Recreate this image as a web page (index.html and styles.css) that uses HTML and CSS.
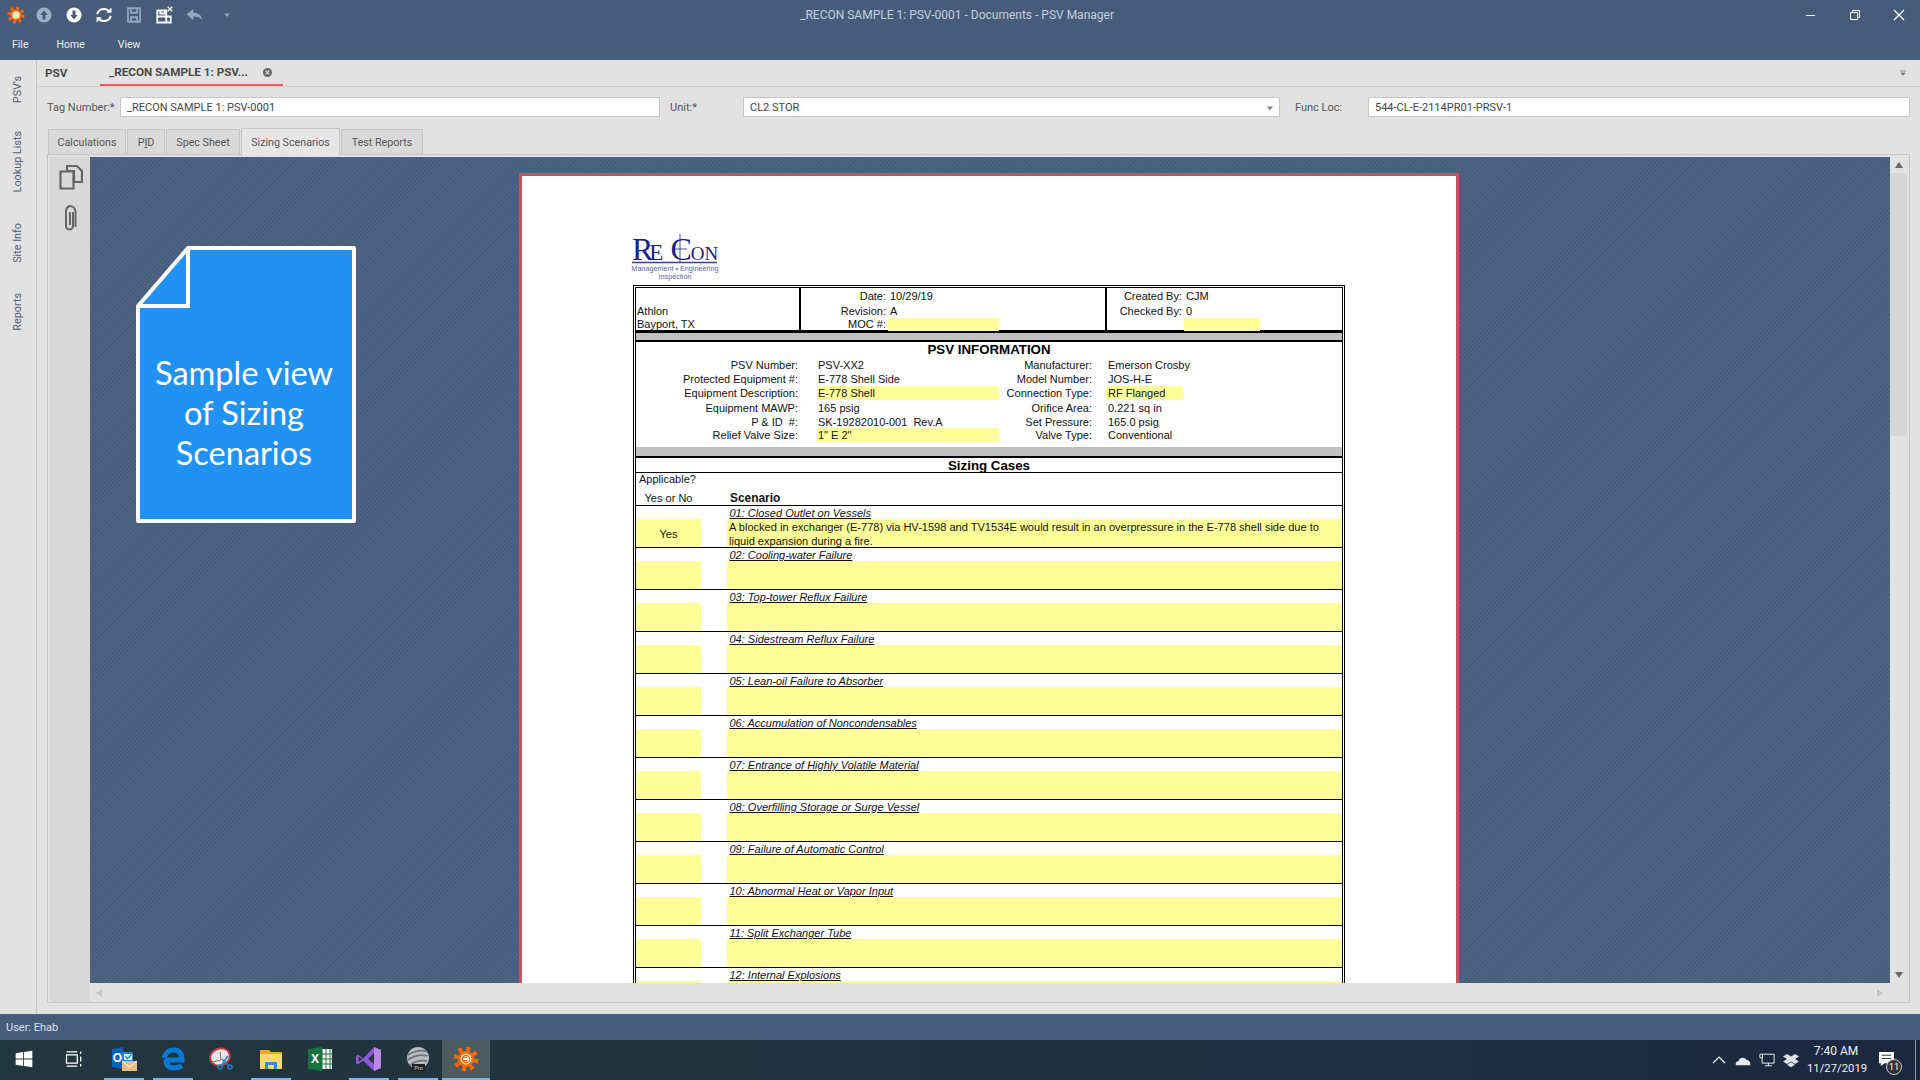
FILE: index.html
```html
<!DOCTYPE html>
<html lang="en">
<head>
    <meta charset="utf-8">
    <title>_RECON SAMPLE 1: PSV-0001 - Documents - PSV Manager</title>
    <link rel="stylesheet" href="styles.css">
</head>
<body>
<svg class="defs" width="0" height="0">
    <symbol id="gear" viewBox="0 0 24 24">
        <circle cx="12" cy="12" r="9" fill="none" stroke="#f66a0a" stroke-width="5" stroke-dasharray="3.5 3.57"/>
        <circle cx="12" cy="12" r="7.5" fill="#f66a0a"/>
    </symbol>
</svg>
<div class="app">
    <header class="titlebar">
        <div class="quick-icons">
            <svg class="qicon" viewBox="0 0 24 24"><use href="#gear"/><circle cx="12" cy="12" r="5" fill="#ffe9b8"/></svg>
            <svg class="qicon" viewBox="0 0 24 24"><circle cx="12" cy="12" r="10" fill="#9fb0c5"/><path d="M12 6l5 6h-3v6h-4v-6H7z" fill="#465c7c"/></svg>
            <svg class="qicon" viewBox="0 0 24 24"><circle cx="12" cy="12" r="10" fill="#fff"/><path d="M12 18l5-6h-3V6h-4v6H7z" fill="#465c7c"/></svg>
            <svg class="qicon" viewBox="0 0 24 24" fill="none" stroke="#fff" stroke-width="2.6"><path d="M3 11a9 8 0 0 1 16-4"/><path d="M21 13a9 8 0 0 1-16 4"/><path d="M22 2v7h-7z" fill="#fff" stroke="none"/><path d="M2 22v-7h7z" fill="#fff" stroke="none"/></svg>
            <svg class="qicon" viewBox="0 0 24 24" fill="none" stroke="#94a6bc" stroke-width="2.4"><path d="M4 3h16v18H4z"/><path d="M8 3v6h8V3M8 21v-6h8v6"/></svg>
            <svg class="qicon" viewBox="0 0 24 24" fill="none" stroke="#fff" stroke-width="2.4"><path d="M3 6h12v16H3zM3 14h18v8H3z"/><path d="M7 6v4h6V6"/><path d="M17 1l6 6M23 1l-6 6" stroke-width="1.6"/></svg>
            <svg class="qicon" viewBox="0 0 24 24"><path d="M2 11l9-7v5c7 0 11 3 12 10-3-4-6-5-12-5v5z" fill="#94a6bc"/></svg>
            <svg class="qicon qicon-small" viewBox="0 0 24 24"><path d="M6 9h12l-6 7z" fill="#94a6bc"/></svg>
        </div>
        <div class="app-title">_RECON SAMPLE 1: PSV-0001 - Documents - PSV Manager</div>
        <div class="window-buttons">
            <svg class="winicon" viewBox="0 0 12 12"><path d="M1 6.5h9" stroke="#fff"/></svg>
            <svg class="winicon" viewBox="0 0 12 12" fill="none" stroke="#fff"><path d="M1.5 3.5h7v7h-7zM3.5 3.5v-2h7v7h-2"/></svg>
            <svg class="winicon" viewBox="0 0 12 12" fill="none" stroke="#fff" stroke-width="1.3"><path d="M1 1l10 10M11 1L1 11"/></svg>
        </div>
    </header>
    <nav class="menubar">
        <span class="menu-file">File</span>
        <span class="menu-home">Home</span>
        <span class="menu-view">View</span>
    </nav>

    <div class="workspace">
        <aside class="rail">
            <span class="rail-item rail-psv">PSV's</span>
            <span class="rail-item rail-lookup">Lookup Lists</span>
            <span class="rail-item rail-site">Site Info</span>
            <span class="rail-item rail-reports">Reports</span>
        </aside>
        <main class="main">
            <div class="doc-tabs">
                <span class="doc-tab doc-tab-home">PSV</span>
                <span class="doc-tab doc-tab-active">_RECON SAMPLE 1: PSV...
                    <svg class="tab-close" viewBox="0 0 12 12"><circle cx="6" cy="6" r="5" fill="#6a6a6a"/><path d="M4 4l4 4M8 4l-4 4" stroke="#e2e2e2" stroke-width="1.2"/></svg>
                </span>
                <svg class="tabs-menu" viewBox="0 0 8 8"><path d="M1 2h6M2 4h4l-2 2.5z" stroke="#777" fill="#777" stroke-width=".8"/></svg>
            </div>
            <div class="field-row">
                <label class="field-label label-tag">Tag Number:*</label>
                <div class="field field-tag">_RECON SAMPLE 1: PSV-0001</div>
                <label class="field-label label-unit">Unit:*</label>
                <div class="field field-unit">CL2 STOR
                    <svg class="combo-arrow" viewBox="0 0 8 8"><path d="M1 2.5h6L4 6.5z" fill="#888"/></svg>
                </div>
                <label class="field-label label-func">Func Loc:</label>
                <div class="field field-func">544-CL-E-2114PR01-PRSV-1</div>
            </div>
            <div class="page-tabs">
                <span class="page-tab tab-calc">Calculations</span>
                <span class="page-tab tab-pid">P<u>I</u>D</span>
                <span class="page-tab tab-spec">Spec Sheet</span>
                <span class="page-tab tab-sizing">Sizing Scenarios</span>
                <span class="page-tab tab-test">Test Reports</span>
            </div>
            <section class="panel">
                <div class="side-tools">
                    <svg class="tool-copy" viewBox="0 0 24 26" fill="none" stroke="#666" stroke-width="2.2"><path d="M8 7V2h10l5 5v11h-8"/><path d="M1.500 7.500h13v17h-13z"/><path d="M8 7h7v11"/></svg>
                    <svg class="tool-clip" viewBox="0 0 15 28" fill="none" stroke="#666" stroke-width="2"><path d="M11 8v14a3.500 3.500 0 0 1-7 0V7a5.500 5.500 0 0 1 3.500-5c3 0 6 2 6 6v15"/><path d="M8 8v13"/></svg>
                </div>
                <div class="view">
                    <div class="sheet-page">
                        <svg class="logo" viewBox="0 0 90 56">
                            <text x="2" y="34" class="logo-mid"><tspan class="logo-big">R</tspan><tspan class="logo-e" dx="-4">E</tspan><tspan class="logo-big" dx="7">C</tspan><tspan dx="-1">ON</tspan></text>
                            <path d="M50 8v28M43 23h14" stroke="#1c2087" stroke-width=".8"/>
                            <path d="M2 36.500h85" stroke="#3a3fa0" stroke-width="1.400"/>
                            <text x="45" y="45" class="logo-small">Management • Engineering</text>
                            <text x="45" y="53" class="logo-small">Inspection</text>
                        </svg>
                        <div class="sheet">
                            <div class="sheet-inner">
                                <div class="doc-head">
                                    <div class="head-cell head-site">
                                        <div>Athlon</div>
                                        <div>Bayport, TX</div>
                                    </div>
                                    <div class="head-cell head-date">
                                        <div class="kv kv-date"><span>Date:</span><span>10/29/19</span></div>
                                        <div class="kv kv-date"><span>Revision:</span><span>A</span></div>
                                        <div class="kv kv-date"><span>MOC #:</span><span class="fill moc"></span></div>
                                    </div>
                                    <div class="head-cell head-by">
                                        <div class="kv kv-by"><span>Created By:</span><span>CJM</span></div>
                                        <div class="kv kv-by"><span>Checked By:</span><span>0</span></div>
                                        <div class="kv kv-by"><span></span><span class="fill checked"></span></div>
                                    </div>
                                </div>
                                <div class="band band-top"></div>
                                <div class="info">
                                    <h2 class="sheet-title info-title">PSV INFORMATION</h2>
                                    <div class="info-row"><span class="lbl">PSV Number:</span><span class="val">PSV-XX2</span><span class="lbl">Manufacturer:</span><span class="val">Emerson Crosby</span></div>
                                    <div class="info-row"><span class="lbl">Protected Equipment #:</span><span class="val">E-778 Shell Side</span><span class="lbl">Model Number:</span><span class="val">JOS-H-E</span></div>
                                    <div class="info-row"><span class="lbl">Equipment Description:</span><span class="val fill">E-778 Shell</span><span class="lbl">Connection Type:</span><span class="val fill fill-short">RF Flanged</span></div>
                                    <div class="info-row row-gap"><span class="lbl">Equipment MAWP:</span><span class="val">165 psig</span><span class="lbl">Orifice Area:</span><span class="val">0.221 sq in</span></div>
                                    <div class="info-row row-thin"><span class="lbl">P &amp; ID  #:</span><span class="val">SK-19282010-001  Rev.A</span><span class="lbl">Set Pressure:</span><span class="val">165.0 psig</span></div>
                                    <div class="info-row"><span class="lbl">Relief Valve Size:</span><span class="val fill">1" E 2"</span><span class="lbl">Valve Type:</span><span class="val">Conventional</span></div>
                                </div>
                                <div class="band band-mid"></div>
                                <h2 class="sheet-title cases-title">Sizing Cases</h2>
                                <div class="cases-head">
                                    <div class="applicable">Applicable?</div>
                                    <div class="cases-cols"><span class="yes-no">Yes or No</span><b class="scenario">Scenario</b></div>
                                </div>
                                <div class="case"><i class="case-name">01: Closed Outlet on Vessels</i><div class="case-yes">Yes</div><div class="case-text">A blocked in exchanger (E-778) via HV-1598 and TV1534E would result in an overpressure in the E-778 shell side due to liquid expansion during a fire.</div></div>
                                <div class="case"><i class="case-name">02: Cooling-water Failure</i><div class="case-yes"></div><div class="case-text"></div></div>
                                <div class="case"><i class="case-name">03: Top-tower Reflux Failure</i><div class="case-yes"></div><div class="case-text"></div></div>
                                <div class="case"><i class="case-name">04: Sidestream Reflux Failure</i><div class="case-yes"></div><div class="case-text"></div></div>
                                <div class="case"><i class="case-name">05: Lean-oil Failure to Absorber</i><div class="case-yes"></div><div class="case-text"></div></div>
                                <div class="case"><i class="case-name">06: Accumulation of Noncondensables</i><div class="case-yes"></div><div class="case-text"></div></div>
                                <div class="case"><i class="case-name">07: Entrance of Highly Volatile Material</i><div class="case-yes"></div><div class="case-text"></div></div>
                                <div class="case"><i class="case-name">08: Overfilling Storage or Surge Vessel</i><div class="case-yes"></div><div class="case-text"></div></div>
                                <div class="case"><i class="case-name">09: Failure of Automatic Control</i><div class="case-yes"></div><div class="case-text"></div></div>
                                <div class="case"><i class="case-name">10: Abnormal Heat or Vapor Input</i><div class="case-yes"></div><div class="case-text"></div></div>
                                <div class="case"><i class="case-name">11: Split Exchanger Tube</i><div class="case-yes"></div><div class="case-text"></div></div>
                                <div class="case"><i class="case-name">12: Internal Explosions</i><div class="case-yes"></div><div class="case-text"></div></div>
                            </div>
                        </div>
                    </div>
                    <div class="note">
                        <svg class="note-shape" viewBox="0 0 220 277"><path d="M52 2H218V275H2V60z" fill="#2192f2" stroke="#fff" stroke-width="4" stroke-linejoin="round"/><path d="M52 2V60H2" fill="none" stroke="#fff" stroke-width="4"/></svg>
                        <p class="note-text">Sample view<br>of Sizing<br>Scenarios</p>
                    </div>
                </div>
                <div class="vscroll">
                    <svg class="sb-arrow" viewBox="0 0 10 10"><path d="M1 8h8L5 2z" fill="#666"/></svg>
                    <div class="vthumb"></div>
                    <svg class="sb-arrow" viewBox="0 0 10 10"><path d="M1 2h8L5 8z" fill="#666"/></svg>
                </div>
                <div class="hscroll">
                    <svg class="sb-arrow" viewBox="0 0 10 10"><path d="M8 1v8L2 5z" fill="#c4c4c4"/></svg>
                    <svg class="sb-arrow" viewBox="0 0 10 10"><path d="M2 1v8l6-4z" fill="#c4c4c4"/></svg>
                </div>
            </section>
        </main>
    </div>

    <footer class="statusbar">User: Ehab</footer>

    <div class="taskbar">
        <div class="task task-start"><svg class="ticon" viewBox="0 0 24 24" fill="#fff"><path d="M2 5l9-1.300V11.500H2zM12 3.500L22 2v9.500H12zM2 12.500h9v7.800L2 19zM12 12.500h10V22l-10-1.500z"/></svg></div>
        <div class="task task-view"><svg class="ticon" viewBox="0 0 24 24" fill="none" stroke="#fff" stroke-width="1.500"><path d="M3 7h13v10H3zM3 3.500h13M3 20.500h13M20 3v3M20 9v6M20 18v3"/></svg></div>
        <div class="task running"><svg class="ticon ticon-large" viewBox="0 0 26 26"><path d="M1 3l11-2v22L1 21z" fill="#0a62c0"/><path d="M11 6h11v9H11z" fill="#1a88de"/><path d="M13 8h8v6h-8z" fill="#fff"/><path d="M14 10l2.500 2.500 4-4" stroke="#1a88de" fill="none" stroke-width="1.500"/><text x="6.500" y="16" class="t-o">O</text><path d="M11 15h15v10H11z" fill="#edbc7c"/><path d="M11 15l7.500 6 7.500-6" fill="none" stroke="#fff" stroke-width="1"/></svg></div>
        <div class="task running"><svg class="ticon ticon-large" viewBox="0 0 26 26" fill="none" stroke="#0a78d7" stroke-width="5"><path d="M6 14h16c0-7-3-10-8.500-10C8 4 5 8 4 12"/><path d="M6 13c0 6 3 9 8 9 3 0 6-1 8-2"/></svg></div>
        <div class="task"><svg class="ticon ticon-large" viewBox="0 0 26 26"><ellipse cx="11" cy="11" rx="10" ry="8.500" fill="#e6e6e6" stroke="#c8353d" stroke-width="2" transform="rotate(-20 11 11)"/><path d="M11 6l1 8M3 16l9-2" stroke="#777"/><path d="M13 13l7 7M19 10l-7 10" stroke="#1c7fcf" stroke-width="1.500"/><circle cx="11" cy="21" r="2" fill="none" stroke="#1c7fcf" stroke-width="1.500"/><circle cx="21" cy="21" r="2" fill="none" stroke="#1c7fcf" stroke-width="1.500"/></svg></div>
        <div class="task running"><svg class="ticon ticon-large" viewBox="0 0 26 26"><path d="M2 4h9l2 2h11v17H2z" fill="#e8a91e"/><path d="M2 8h22v15H2z" fill="#fbd96c"/><path d="M7 23v-7h12v7h-3v-4h-6v4z" fill="#2b8fe6"/></svg></div>
        <div class="task"><svg class="ticon ticon-large" viewBox="0 0 26 26"><path d="M12 3h13v20H12z" fill="#fff"/><path d="M15 3v20M19 3v20M23 3v20M12 8h13M12 13h13M12 18h13" stroke="#1a7140"/><path d="M1 3l14-2v24L1 23z" fill="#1a7140"/><text x="8" y="17" class="t-x">X</text></svg></div>
        <div class="task running"><svg class="ticon ticon-large" viewBox="0 0 26 26"><path d="M18 1l7 3v18l-7 3-11-10.500-5 4-2-1.200V9.700l2-1.200 5 4z" fill="#8c5ad6"/><path d="M18 7l-6 6 6 5z" fill="#2a3640"/><path d="M2.500 10.500L6 13l-3.500 3z" fill="#2a3640"/><path d="M18 1l7 3v18l-7 3z" fill="#b78ae8"/></svg></div>
        <div class="task running"><svg class="ticon ticon-large" viewBox="0 0 26 26"><circle cx="13" cy="12" r="11" fill="#b8bcc0"/><path d="M3 9c6-4 12-5 18-4M2.500 14c6-4 14-6 20-4M5 19c5-4 12-5 17-4" stroke="#6f7378" fill="none" stroke-width="1.800"/><path d="M7 18h13v7H7z" fill="#222"/><text x="13.500" y="24" class="t-pro">Pro</text></svg></div>
        <div class="task running task-active"><svg class="ticon ticon-large" viewBox="0 0 24 24"><use href="#gear"/><circle cx="12" cy="12" r="5" fill="#fff"/><circle cx="12" cy="12" r="3.400" fill="none" stroke="#f66a0a" stroke-width="1.300"/><path d="M9 10.500h4M9 13.500h4" stroke="#f66a0a"/></svg></div>
        <div class="tray">
            <svg class="tray-icon" viewBox="0 0 16 16" fill="none" stroke="#fff" stroke-width="1.200"><path d="M2 11l6-6 6 6"/></svg>
            <svg class="tray-icon" viewBox="0 0 18 16"><path d="M1 14c-1-4 2-5 3-5 1-4 7-5 9-1 3 0 5 3 4 6z" fill="#e6e8ec"/></svg>
            <svg class="tray-icon" viewBox="0 0 18 18" fill="none" stroke="#fff"><path d="M1 2.500h3v4H1zM4 2.500h13v10H3.500V6.500M10.500 12.500v3M6.500 15.500h8"/></svg>
            <svg class="tray-icon" viewBox="0 0 16 16" fill="#dfe2e6"><path d="M4 2l4 2.500L12 2l4 2.500L12 7l4 2.500L12 12 8 9.500 4 12 0 9.500 4 7 0 4.500zM4 12.700l4 2.500 4-2.500-4-2.500z"/></svg>
            <div class="clock"><div>7:40 AM</div><div class="clock-date">11/27/2019</div></div>
            <div class="notify">
                <svg class="notify-icon" viewBox="0 0 18 16"><path d="M1 1h16v12H7l-4 3v-3H1z" fill="#fff"/><path d="M4 4.500h10M4 8h10" stroke="#1c2740"/></svg>
                <span class="notify-badge">11</span>
            </div>
        </div>
    </div>
</div>
</body>
</html>
```

FILE: styles.css
```css
* {
    box-sizing: border-box;
}

body {
    margin: 0;
    font-family: Roboto, sans-serif;
    font-size: 11px;
    color: #555;
    background-color: #e2e2e2;
}

.defs {
    display: block;
    height: 0;
}

.app {
    display: flex;
    flex-direction: column;
    width: 1920px;
    height: 1080px;
    overflow: hidden;
}

/* title bar */
.titlebar {
    display: flex;
    align-items: center;
    height: 30px;
    background-color: #475c7b;
}

.quick-icons {
    display: flex;
    align-items: center;
    gap: 12px;
    padding-left: 7px;
}

.qicon {
    width: 18px;
    height: 18px;
}

.qicon:first-child {
    margin-right: -2px;
}

.qicon-small {
    width: 12px;
    height: 12px;
    margin-left: 6px;
}

.app-title {
    flex: 1;
    padding-right: 124px;
    text-align: center;
    color: #c4cedb;
    font-size: 12px;
}

.window-buttons {
    display: flex;
    gap: 32px;
    padding-right: 15px;
}

.winicon {
    width: 12px;
    height: 12px;
}

.menubar {
    display: flex;
    align-items: center;
    height: 30px;
    padding-bottom: 1px;
    background-color: #475c7b;
    color: #e8edf2;
    font-size: 10.5px;
}

.menu-file {
    margin-left: 12px;
}

.menu-home {
    margin-left: 28px;
}

.menu-view {
    margin-left: 33px;
}

/* left rail and main area */
.workspace {
    display: flex;
    flex: 1;
    min-height: 0;
}

.rail {
    display: flex;
    flex-direction: column;
    align-items: center;
    width: 37px;
    padding-right: 2px;
    border-right: 1px solid #c6c6c6;
}

.rail-item {
    writing-mode: vertical-rl;
    transform: rotate(180deg);
    font-size: 10.8px;
    color: #50607a;
}

.rail-psv {
    margin-top: 16px;
}

.rail-lookup {
    margin-top: 28px;
}

.rail-site {
    margin-top: 30px;
}

.rail-reports {
    margin-top: 31px;
}

.main {
    display: flex;
    flex: 1;
    flex-direction: column;
    min-width: 0;
    padding: 0 10px 11px 0;
}

.doc-tabs {
    display: flex;
    align-items: stretch;
    height: 27px;
    margin-right: -10px;
    border-bottom: 1px solid #cfcfcf;
    font-weight: 700;
    color: #4a4a4a;
}

.doc-tab {
    display: flex;
    align-items: center;
    font-size: 11.7px;
}

.doc-tab-home {
    width: 55px;
    margin-left: 8px;
}

.doc-tab-active {
    width: 183px;
    height: 26px;
    padding-left: 9px;
    border-bottom: 2px solid #f9575d;
    white-space: nowrap;
}

.tab-close {
    width: 11px;
    height: 11px;
    margin-left: 14px;
}

.tabs-menu {
    width: 8px;
    height: 8px;
    margin: 9px 13px 0 auto;
}

.field-row {
    display: flex;
    align-items: center;
    height: 20px;
    margin-top: 10px;
}

.field-label {
    white-space: nowrap;
}

.label-tag {
    width: 83px;
    padding-left: 10px;
}

.label-unit {
    width: 83px;
    padding-left: 10px;
}

.label-func {
    width: 88px;
    padding-left: 15px;
}

.field {
    display: flex;
    align-items: center;
    height: 20px;
    padding-left: 6px;
    background-color: #fff;
    border: 1px solid #c6c6c6;
    color: #444;
}

.field-tag {
    width: 540px;
}

.field-unit {
    width: 537px;
}

.field-func {
    width: 542px;
}

.combo-arrow {
    width: 8px;
    height: 8px;
    margin: 1px 5px 0 auto;
}

.page-tabs {
    display: flex;
    align-items: flex-end;
    height: 26px;
    margin: 11px 0 0 11px;
}

.page-tab {
    display: flex;
    align-items: center;
    justify-content: center;
    height: 25px;
    margin-right: 1px;
    background-color: #d9d9d9;
    border: 1px solid #c6c6c6;
    border-bottom: 0;
    font-size: 10.7px;
    color: #555;
}

.tab-calc {
    width: 78px;
}

.tab-pid {
    width: 38px;
}

.tab-spec {
    width: 74px;
}

.tab-sizing {
    position: relative;
    width: 99px;
    height: 27px;
    margin-bottom: -1px;
    background-color: #e6e6e6;
}

.tab-test {
    width: 82px;
}

.panel {
    display: grid;
    flex: 1;
    grid-template-columns: 40px 1fr 19px;
    grid-template-rows: 1fr 19px;
    min-height: 0;
    margin-left: 10px;
    padding: 2px 0 0 2px;
    border: 1px solid #c6c6c6;
}

.side-tools {
    display: flex;
    flex-direction: column;
    align-items: center;
    grid-row: 1 / 3;
    gap: 14px;
    padding: 7px 0 0 2px;
    background-color: #d8d8d8;
}

.tool-copy {
    width: 24px;
    height: 26px;
}

.tool-clip {
    width: 15px;
    height: 28px;
    margin-left: -4px;
}

.view {
    position: relative;
    overflow: hidden;
    background: repeating-linear-gradient(135deg, #475c7b 0 1.5px, #506583 1.5px 3px);
}

/* scrollbars */
.vscroll {
    display: flex;
    flex-direction: column;
    align-items: center;
    padding: 3px 2px 3px 0;
}

.vthumb {
    width: 17px;
    height: 263px;
    margin: 3px 0 auto;
    background-color: #d6d6d6;
    border-radius: 2px;
}

.hscroll {
    display: flex;
    grid-column: 2 / 4;
    justify-content: space-between;
    align-items: center;
    padding: 0 24px 0 4px;
}

.sb-arrow {
    width: 10px;
    height: 10px;
}

/* scanned sheet */
.sheet-page {
    width: 940px;
    min-height: 1200px;
    margin: 16px 0 0 429px;
    padding: 50px 0 0 111px;
    background-color: #fff;
    border: 3px solid #c8505e;
    font-family: "Liberation Sans", Arial, sans-serif;
    font-size: 11px;
    color: #111;
}

.logo {
    display: block;
    width: 90px;
    height: 56px;
    margin: 0 0 3px -3px;
}

.logo-mid {
    font-family: "Liberation Serif", serif;
    font-size: 19px;
    fill: #1c2087;
}

.logo-big {
    font-size: 32px;
}

.logo-e {
    font-size: 23px;
}

.logo-small {
    font-family: "Liberation Sans", sans-serif;
    font-size: 7.200px;
    fill: #5a60a8;
    text-anchor: middle;
}

.sheet {
    width: 712px;
    padding: 1px;
    border: 1px solid #000;
}

.sheet-inner {
    border: 1px solid #000;
    border-bottom: 0;
}

.doc-head {
    display: grid;
    grid-template-columns: 163px 306px 1fr;
    height: 45px;
    border-bottom: 3px solid #000;
}

.head-cell {
    display: flex;
    flex-direction: column;
    padding-top: 2px;
    line-height: 13px;
}

.head-site {
    justify-content: flex-end;
    padding: 0 0 0 1px;
}

.head-date,
.head-by {
    border-left: 2px solid #000;
}

.kv {
    display: grid;
    height: 13px;
    column-gap: 4px;
}

.kv:first-child {
    height: 15px;
}

.kv span:first-child {
    text-align: right;
}

.kv-date {
    grid-template-columns: 85px 1fr;
}

.kv-by {
    grid-template-columns: 75px 1fr;
}

.fill {
    background-color: #ffff99;
}

.moc {
    width: 111px;
    height: 13px;
    margin-left: -2px;
}

.checked {
    width: 76px;
    height: 13px;
    margin-left: -2px;
}

.band {
    background-color: #c0c0c0;
    border-bottom: 2px solid #000;
}

.band-top {
    height: 9px;
}

.band-mid {
    height: 11px;
}

.sheet-title {
    margin: 0;
    font-size: 13.300px;
    font-weight: 700;
    text-align: center;
    color: #000;
}

.info {
    height: 105px;
}

.info-title {
    height: 16px;
    line-height: 15px;
}

.info-row {
    display: grid;
    grid-template-columns: 163px 200px 94px 1fr;
    height: 14px;
    line-height: 14px;
}

.row-gap {
    margin-top: 1px;
}

.row-thin {
    height: 13px;
}

.lbl {
    padding-right: 1px;
    text-align: right;
    white-space: pre;
}

.val {
    margin-left: 18px;
    padding-left: 1px;
    white-space: pre;
}

.info-row .val:nth-child(4) {
    margin-left: 13px;
    padding-left: 2px;
}

.fill-short {
    width: 77px;
}

.cases-title {
    height: 15px;
    line-height: 16px;
    border-bottom: 1px solid #000;
}

.cases-head {
    height: 33px;
    border-bottom: 1px solid #000;
}

.applicable {
    height: 18px;
    padding-left: 3px;
    line-height: 13px;
}

.cases-cols {
    display: grid;
    grid-template-columns: 65px 1fr;
    column-gap: 26px;
    line-height: 15px;
}

.yes-no {
    text-align: center;
}

.scenario {
    padding-left: 3px;
    font-size: 11.900px;
}

.case {
    display: grid;
    grid-template-columns: 65px 1fr;
    grid-template-rows: 13px 28px;
    column-gap: 26px;
    height: 42px;
    border-bottom: 1px solid #000;
}

.case-name {
    grid-column: 2;
    padding: 1px 0 0 2.500px;
    line-height: 13px;
    text-decoration: underline;
}

.case-yes {
    display: flex;
    align-items: center;
    justify-content: center;
    padding-top: 1px;
    background-color: #ffff99;
}

.case-text {
    padding: 1px 0 0 2px;
    background-color: #ffff99;
    font-size: 11.050px;
    line-height: 14px;
}

/* floating note */
.note {
    position: absolute;
    left: 46px;
    top: 89px;
    width: 220px;
    height: 277px;
}

.note-shape {
    display: block;
    position: absolute;
    left: 0;
    top: 0;
    width: 220px;
    height: 277px;
}

.note-text {
    position: relative;
    margin: 0;
    padding: 107px 4px 0 0;
    font-family: "Lato", sans-serif;
    font-size: 32.500px;
    line-height: 40px;
    text-align: center;
    color: #fff;
}

/* status and task bars */
.statusbar {
    display: flex;
    align-items: center;
    height: 26px;
    padding-left: 6px;
    background-color: #475c7b;
    color: #dbe1e9;
}

.taskbar {
    display: flex;
    align-items: stretch;
    height: 40px;
    background: linear-gradient(90deg, #22363f 0%, #22343f 40%, #1b2840 100%);
}

.task {
    display: flex;
    align-items: center;
    justify-content: center;
    width: 49px;
    padding-bottom: 2px;
}

.task-start {
    width: 48px;
}

.task-view {
    width: 51px;
}

.running {
    background: linear-gradient(#76b9ed, #76b9ed) center bottom / 40px 2px no-repeat;
}

.task-active {
    width: 48px;
    background: linear-gradient(#76b9ed, #76b9ed) center bottom / 100% 2px no-repeat #4c5a62;
}

.ticon {
    width: 20px;
    height: 20px;
}

.ticon-large {
    width: 26px;
    height: 26px;
}

.t-o,
.t-x {
    font-family: "Liberation Sans", sans-serif;
    font-size: 12px;
    font-weight: 700;
    fill: #fff;
    text-anchor: middle;
}

.t-pro {
    font-family: "Liberation Sans", sans-serif;
    font-size: 5.500px;
    fill: #ddd;
    text-anchor: middle;
}

.tray {
    display: flex;
    align-items: center;
    flex: 1;
    justify-content: flex-end;
    gap: 8px;
    color: #eef1f4;
    font-size: 12px;
}

.tray-icon {
    width: 16px;
    height: 16px;
}

.clock {
    width: 58px;
    text-align: center;
    line-height: 18px;
    white-space: nowrap;
}

.clock-date {
    font-size: 11.300px;
}

.notify {
    position: relative;
    width: 43px;
    height: 40px;
    margin-right: 4px;
    border-right: 1px solid #8a94a0;
}

.notify-icon {
    position: absolute;
    left: 5px;
    top: 11px;
    width: 17px;
    height: 15px;
}

.notify-badge {
    position: absolute;
    left: 13px;
    top: 19px;
    width: 16px;
    height: 16px;
    border-radius: 50%;
    background-color: #333;
    border: 1px solid #ccc;
    font-size: 9.500px;
    line-height: 14px;
    text-align: center;
    color: #fff;
}
```
